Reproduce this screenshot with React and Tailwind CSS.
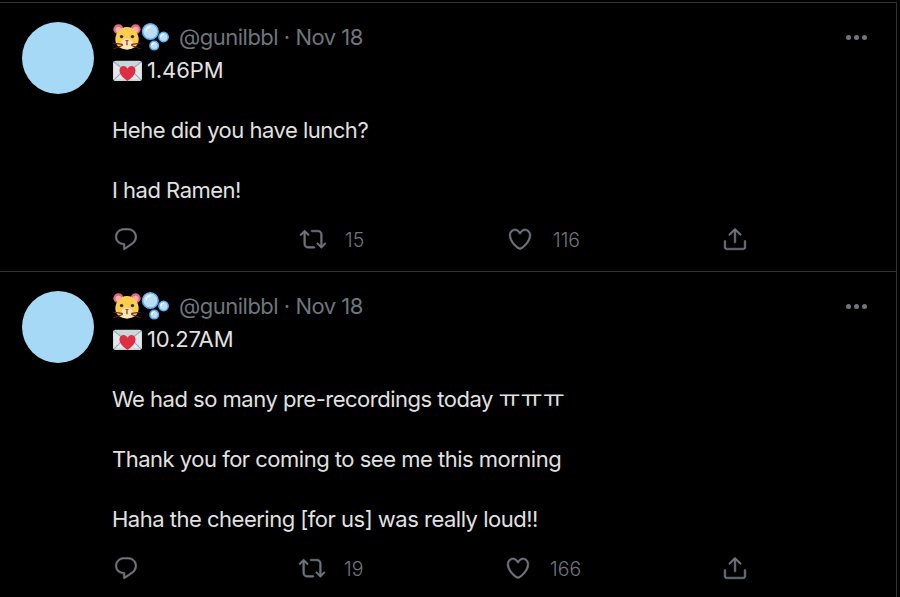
const Reply = () => (
  <svg viewBox="0 0 24 24" className="w-[26px] h-[26px] fill-[#6e767d]"><path d="M14.046 2.242l-4.148-.01h-.002c-4.374 0-7.8 3.427-7.8 7.802 0 4.098 3.186 7.206 7.465 7.37v3.828c0 .108.044.286.12.403.142.225.384.347.632.347.138 0 .277-.038.402-.118.264-.168 6.473-4.14 8.088-5.506 1.902-1.61 3.04-3.97 3.043-6.312v-.017c-.006-4.367-3.43-7.787-7.8-7.788zm3.787 12.972c-1.134.96-4.862 3.405-6.772 4.643V16.67c0-.414-.335-.75-.75-.75h-.396c-3.66 0-6.318-2.476-6.318-5.886 0-3.534 2.768-6.302 6.3-6.302l4.147.01h.002c3.532 0 6.3 2.766 6.302 6.296-.003 1.91-.942 3.844-2.514 5.176z" stroke="#6e767d" strokeWidth="0.5" /></svg>
);
const Retweet = () => (
  <svg viewBox="0 0 24 24" className="w-[28px] h-[26px] fill-[#6e767d]"><path d="M23.77 15.67c-.292-.293-.767-.293-1.06 0l-2.22 2.22V7.65c0-2.068-1.683-3.75-3.75-3.75h-5.85c-.414 0-.75.336-.75.75s.336.75.75.75h5.85c1.24 0 2.25 1.01 2.25 2.25v10.24l-2.22-2.22c-.293-.293-.768-.293-1.06 0s-.294.768 0 1.06l3.5 3.5c.145.147.337.22.53.22s.383-.072.53-.22l3.5-3.5c.294-.292.294-.767 0-1.06zm-10.66 3.28H7.26c-1.24 0-2.25-1.01-2.25-2.25V6.46l2.22 2.22c.148.147.34.22.532.22s.384-.073.53-.22c.293-.293.293-.768 0-1.06l-3.5-3.5c-.293-.294-.768-.294-1.06 0l-3.5 3.5c-.294.292-.294.767 0 1.06s.767.293 1.06 0l2.22-2.22V16.7c0 2.068 1.683 3.75 3.75 3.75h5.85c.414 0 .75-.336.75-.75s-.337-.75-.75-.75z" stroke="#6e767d" strokeWidth="0.5" /></svg>
);
const Like = () => (
  <svg viewBox="0 0 24 24" className="w-[26px] h-[26px] fill-[#6e767d]"><path d="M12 21.638h-.014C9.403 21.59 1.95 14.856 1.95 8.478c0-3.064 2.525-5.754 5.403-5.754 2.29 0 3.83 1.58 4.646 2.73.814-1.148 2.354-2.73 4.645-2.73 2.88 0 5.404 2.69 5.404 5.755 0 6.376-7.454 13.11-10.037 13.157H12zM7.354 4.225c-2.08 0-3.903 1.988-3.903 4.255 0 5.74 7.034 11.596 8.55 11.658 1.518-.062 8.55-5.917 8.55-11.658 0-2.267-1.823-4.255-3.903-4.255-2.528 0-3.94 2.936-3.952 2.965-.23.562-1.156.562-1.387 0-.014-.03-1.425-2.965-3.954-2.965z" stroke="#6e767d" strokeWidth="0.5" /></svg>
);
const Share = () => (
  <svg viewBox="0 0 24 24" className="w-[26px] h-[26px] fill-[#6e767d]" stroke="#6e767d" strokeWidth="0.5"><path d="M17.53 7.47l-5-5c-.293-.293-.768-.293-1.06 0l-5 5c-.294.293-.294.768 0 1.06s.767.294 1.06 0l3.72-3.72V15c0 .414.336.75.75.75s.75-.336.75-.75V4.81l3.72 3.72c.146.147.338.22.53.22s.384-.072.53-.22c.293-.293.293-.767 0-1.06z" /><path d="M19.708 21.944H4.292C3.028 21.944 2 20.916 2 19.652V14c0-.414.336-.75.75-.75s.75.336.75.75v5.652c0 .437.355.792.792.792h15.416c.437 0 .792-.355.792-.792V14c0-.414.336-.75.75-.75s.75.336.75.75v5.652c0 1.264-1.028 2.292-2.292 2.292z" /></svg>
);
const Hamster = () => (
  <svg viewBox="0 0 36 36" className="w-[28px] h-[28px] shrink-0">
    <circle cx="7" cy="8" r="6.500" fill="#E0697C" /><circle cx="29" cy="8" r="6.500" fill="#E0697C" />
    <circle cx="7" cy="8.500" r="3.800" fill="#F4ABBA" /><circle cx="29" cy="8.500" r="3.800" fill="#F4ABBA" />
    <path d="M18 5C8 5 3 14 3 21c0 9 7 13 15 13s15-4 15-13c0-7-5-16-15-16z" fill="#FFCC4D" />
    <path d="M18 20c-4 0-8 4-9 8 0 4 5 6 9 6s9-2 9-6c-1-4-5-8-9-8z" fill="#FFE8B6" />
    <circle cx="11" cy="17.500" r="2.200" fill="#292F33" /><circle cx="25" cy="17.500" r="2.200" fill="#292F33" />
    <path d="M15.500 22h5l-2.500 3z" fill="#DD2E44" />
    <path d="M18 25v3M1 26l11 1.500M1 33l11-4M35 26l-11 1.500M35 33l-11-4" stroke="#662113" strokeWidth="1.400" strokeLinecap="round" fill="none" />
  </svg>
);
const Bubble = ({ cx, cy, r }) => (
  <g>
    <circle cx={cx} cy={cy} r={r} fill="#BBDDF5" stroke="#5DADEC" strokeWidth="2" />
    <path d={`M${cx - r * 0.55} ${cy - r * 0.1}a${r * 0.6} ${r * 0.6} 0 0 1 ${r * 0.55}-${r * 0.5}`} stroke="#fff" strokeWidth="1.6" fill="none" strokeLinecap="round" />
  </g>
);
const Bubbles = () => (
  <svg viewBox="0 0 36 36" className="w-[28px] h-[28px] shrink-0">
    <Bubble cx={12} cy={11} r={10} /><Bubble cx={29} cy={18} r={6} /><Bubble cx={17} cy={29} r={5.500} />
  </svg>
);
const Letter = () => (
  <svg viewBox="0 0 36 36" className="w-[29px] h-[29px] shrink-0">
    <rect x="0" y="6" width="36" height="25" rx="3.500" fill="#CCD6DD" />
    <path d="M1 9l17 12L35 9v20L1 29z" fill="#E1E8ED" />
    <path d="M1 30l13-13M35 30L22 17M1 7l17 14L35 7" stroke="#99AAB5" strokeWidth="1.400" fill="none" />
    <path d="M18 31c-1-1-10-6.500-10-13C8 14.500 10.500 12.500 13 12.500c2.300 0 4 1.500 5 3.300 1-1.800 2.700-3.300 5-3.300 2.500 0 5 2 5 5.500C28 24.500 19 30 18 31z" fill="#DD2E44" />
  </svg>
);
const Action = ({ width, children, count, gap }) => (
  <div className="flex items-center" style={{ width }}>
    {children}
    {count && <span className="mt-[1px] text-[19.500px] font-light leading-[26px] text-[#6e767d]" style={{ marginLeft: gap }}>{count}</span>}
  </div>
);
const Tweet = ({ time, lines, widths, gaps, counts }) => (
  <article className="flex border-b border-[#2f3336] pl-[22px] pt-[19px] pr-[29px]">
    <div className="w-[72px] h-[72px] rounded-full bg-[#a5d9f5] shrink-0" />
    <div className="ml-[18px] flex-1">
      <div className="flex items-center h-[30px] pl-px">
        <Hamster /><Bubbles />
        <span className="ml-[10px] text-[22px] tracking-[-0.5px] text-[#6e767d]">@gunilbbl · Nov 18</span>
        <div className="ml-auto flex gap-[3px]">
          <span className="w-[5px] h-[5px] rounded-full bg-[#6e767d]" />
          <span className="w-[5px] h-[5px] rounded-full bg-[#6e767d]" />
          <span className="w-[5px] h-[5px] rounded-full bg-[#6e767d]" />
        </div>
      </div>
      <div className="text-[22px] leading-[30px] tracking-[-0.5px] text-[#e1e1e1] mt-[3px]">
        <div className="flex items-center h-[30px] pl-px"><Letter /><span className="ml-[5px] tracking-[-0.1px]">{time}</span></div>
        {lines.map((l, i) => <div key={i} className="h-[30px] whitespace-pre">{l}</div>)}
      </div>
      <div className="flex mt-[21px] mb-[19px] h-[26px] pl-px">
        <Action width={widths[0]}><Reply /></Action>
        <Action width={widths[1]} count={counts[0]} gap={gaps[0]}><Retweet /></Action>
        <Action width={widths[2]} count={counts[1]} gap={gaps[1]}><Like /></Action>
        <Action><Share /></Action>
      </div>
    </div>
  </article>
);
export default function App() {
  return (
    <div className="w-[900px] h-[597px] bg-black overflow-hidden pt-[2px]" style={{ fontFamily: 'Inter, "Noto Sans CJK KR", sans-serif' }}>
      <div className="w-[897px] h-[595px] border-t border-r border-[#2f3336]">
        <Tweet time="1.46PM" lines={["", "Hehe did you have lunch?", "", "I had Ramen!"]} widths={[186, 208, 215]} gaps={[18, 20]} counts={["15", "116"]} />
        <Tweet time="10.27AM" lines={["", <>We had so many pre-recordings today <span className="text-[24px] tracking-normal">ㅠㅠㅠ</span></>, "", "Thank you for coming to see me this morning", "", "Haha the cheering [for us] was really loud!!"]} widths={[185, 207, 217]} gaps={[18, 19]} counts={["19", "166"]} />
      </div>
    </div>
  );
}
